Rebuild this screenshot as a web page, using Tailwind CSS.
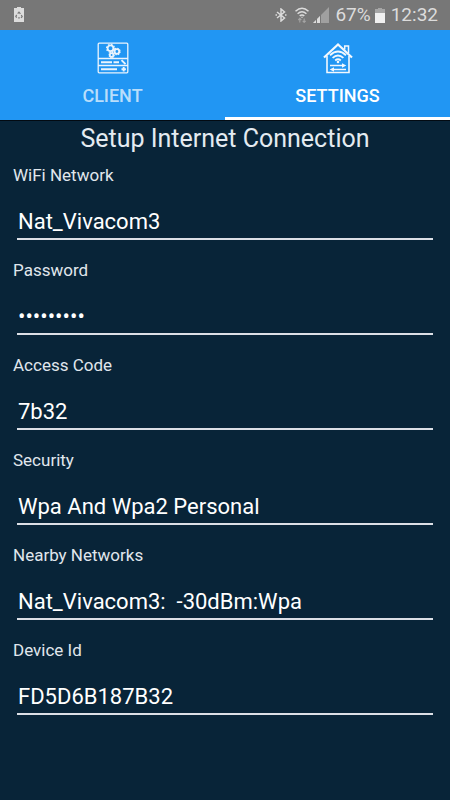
<!DOCTYPE html>
<html lang="en">
<head>
<meta charset="utf-8">
<meta name="viewport" content="width=device-width, initial-scale=1">
<title>Setup Internet Connection</title>
<script src="https://cdn.jsdelivr.net/npm/@tailwindcss/browser@4"></script>
</head>
<body class="min-h-screen bg-[#082438] font-[Roboto,sans-serif] text-white">
  <header>
    <div class="flex h-[30px] items-center justify-between bg-[#777777] pr-3 pl-[14px] text-[#dcdcdc]">
      <svg class="h-4 w-[10px]" viewBox="0 0 10 16" aria-label="Battery saver">
        <path d="M3 0h4v1h3v14H0V1h3z" fill="#dcdcdc"/>
        <path d="M3.700 6.700 5 5.100l1.400 1.700M7.300 7.900l.9 1.800L7 10.900M5.800 10.900H4.200M2.700 10.700l-.9-1.300.9-1.500" fill="none" stroke="#777777" stroke-width="1.200"/>
      </svg>
      <div class="flex items-center">
        <svg class="h-[14px] w-3" viewBox="0 0 12 14" fill="none" stroke="#dcdcdc" stroke-width="1.500" aria-label="Bluetooth">
          <path d="M2 4l7.500 6L6 13V1l3.500 3L2 10"/>
          <path d="M.5 7H2M10 7h1.500"/>
        </svg>
        <svg class="ml-2 h-4 w-[14px]" viewBox="0 0 14 16" fill="none" stroke="#dcdcdc" stroke-width="1.500" aria-label="Wi-Fi">
          <path d="M.5 4.300Q7-1.800 13.500 4.300M2.600 6.700q4.400-4 8.800 0M4.700 8.900q2.300-1.900 4.600 0"/>
          <circle cx="7" cy="10.300" r=".7" fill="#dcdcdc" stroke="none"/>
          <path d="M4.800 15.500v-4M3.300 13l1.500-1.600L6.300 13M9.200 11.400v4M7.700 13.800l1.500 1.600 1.500-1.600" stroke="#a4a4a4" stroke-width="1.100"/>
        </svg>
        <svg class="ml-1 h-4 w-4" viewBox="0 0 16 16" aria-label="Signal">
          <path d="M0 16 16 0v16z" fill="#a0a0a0"/>
          <path d="M0 16l3-3v3zM4 12l3-3v7H4z" fill="#dcdcdc"/>
          <path d="M3.500 12v4M7.500 8v8" stroke="#777777"/>
        </svg>
        <span class="ml-[6px] text-[19px]">67%</span>
        <svg class="ml-1 h-4 w-[10px]" viewBox="0 0 10 16" aria-label="Battery">
          <path d="M3 1h4v1h3v5H0V2h3z" fill="#a6a6a6"/>
          <path d="M0 6h10v10H0z" fill="#f0f0f0"/>
        </svg>
        <span class="ml-[6px] text-[19px]">12:32</span>
      </div>
    </div>
    <nav class="grid h-[91px] grid-cols-2 border-b border-[#020a12] bg-[#2196f3]">
      <a href="#client" class="flex flex-col items-center border-b-3 border-transparent pt-[12px] text-lg leading-5 font-medium text-white/70">
        <svg class="mb-3 h-8 w-8" viewBox="0 0 32 32" fill="none" stroke="#eaf4fd" stroke-width="1.300" aria-hidden="true">
          <rect x="1.200" y="1.200" width="29.600" height="29.600" rx="1"/>
          <path d="M1 16.500h30M1 23.500h30"/>
          <path d="M4 20.300h11M16.500 20.300H22M4 27.300h16" stroke-width="1.900"/>
          <path d="m24.500 18.200 4 4" stroke-width="1.900"/>
          <path d="M24.500 27.300h4.400M26.700 25.100v4.400" stroke-width="1.900"/>
          <g stroke-width="1.800">
            <circle cx="13.500" cy="6.300" r="2.900"/><circle cx="19.900" cy="9.500" r="2.300"/><circle cx="14.600" cy="13" r="1.800"/>
          </g>
          <g stroke-width="1.100">
            <circle cx="13.500" cy="6.300" r="4" stroke-dasharray="1.600 1.540"/>
            <circle cx="19.900" cy="9.500" r="3.300" stroke-dasharray="1.400 1.190"/>
            <circle cx="14.600" cy="13" r="2.600" stroke-dasharray="1.200 .840"/>
          </g>
        </svg>
        CLIENT
      </a>
      <a href="#settings" aria-current="page" class="flex flex-col items-center border-b-3 border-white pt-[12px] text-lg leading-5 font-medium text-white">
        <svg class="mb-3 h-8 w-8" viewBox="0 0 32 32" fill="none" stroke="#f2f8fe" stroke-width="1.600" aria-hidden="true">
          <path d="M5 14v16.500h22V14"/>
          <path d="M2 15.500 16 2.500l14 13" stroke-width="2.200"/>
          <path d="M22.700 7.500V4h3.800v7" stroke-width="1.500"/>
          <path d="M8 13.200q8-7.200 16 0M10.600 15.900q5.400-4.800 10.800 0M13.200 18.500q2.800-2.300 5.600 0" stroke-width="1.900"/>
          <circle cx="16" cy="20" r="1.300" fill="#f2f8fe" stroke="none"/>
          <path d="M8 23.500h13M24 27.500H11" stroke-width="1.700"/>
          <path d="m20 21.200 4.300 2.300-4.300 2.300zM12 25.200l-4.300 2.300 4.300 2.300z" fill="#f2f8fe" stroke="none"/>
        </svg>
        SETTINGS
      </a>
    </nav>
  </header>
  <main>
    <h1 class="pt-[2px] text-center text-[25px] leading-8 text-[#e4ebf1]">Setup Internet Connection</h1>
    <form class="flex flex-col gap-[18px] pt-2 pr-[17px] pl-[13px] text-[#e0e7ed]">
      <div class="flex flex-col">
        <label for="wifi" class="text-[17px] leading-6">WiFi Network</label>
        <input id="wifi" type="text" value="Nat_Vivacom3" class="mt-[18px] ml-1 h-[35px] border-b-2 border-[#dcdfe6] pl-px text-[22px] text-white outline-none">
      </div>
      <div class="flex flex-col">
        <label for="password" class="text-[17px] leading-6">Password</label>
        <input id="password" type="password" value="vivacom12" class="mt-[18px] ml-1 h-[35px] border-b-2 border-[#dcdfe6] pl-px text-[22px] text-white outline-none">
      </div>
      <div class="flex flex-col">
        <label for="code" class="text-[17px] leading-6">Access Code</label>
        <input id="code" type="text" value="7b32" class="mt-[18px] ml-1 h-[35px] border-b-2 border-[#dcdfe6] pl-px text-[22px] text-white outline-none">
      </div>
      <div class="flex flex-col">
        <label for="security" class="text-[17px] leading-6">Security</label>
        <select id="security" class="mt-[18px] ml-1 h-[35px] appearance-none border-b-2 border-[#dcdfe6] pl-px text-[22px] text-white outline-none">
          <option>Wpa And Wpa2 Personal</option>
        </select>
      </div>
      <div class="flex flex-col">
        <label for="nearby" class="text-[17px] leading-6">Nearby Networks</label>
        <select id="nearby" class="mt-[18px] ml-1 h-[35px] appearance-none border-b-2 border-[#dcdfe6] pl-px text-[22px] text-white outline-none">
          <option>Nat_Vivacom3:&nbsp; -30dBm:Wpa</option>
        </select>
      </div>
      <div class="flex flex-col">
        <label for="device" class="text-[17px] leading-6">Device Id</label>
        <input id="device" type="text" value="FD5D6B187B32" class="mt-[18px] ml-1 h-[35px] border-b-2 border-[#dcdfe6] pl-px text-[22px] text-white outline-none">
      </div>
    </form>
  </main>
</body>
</html>
